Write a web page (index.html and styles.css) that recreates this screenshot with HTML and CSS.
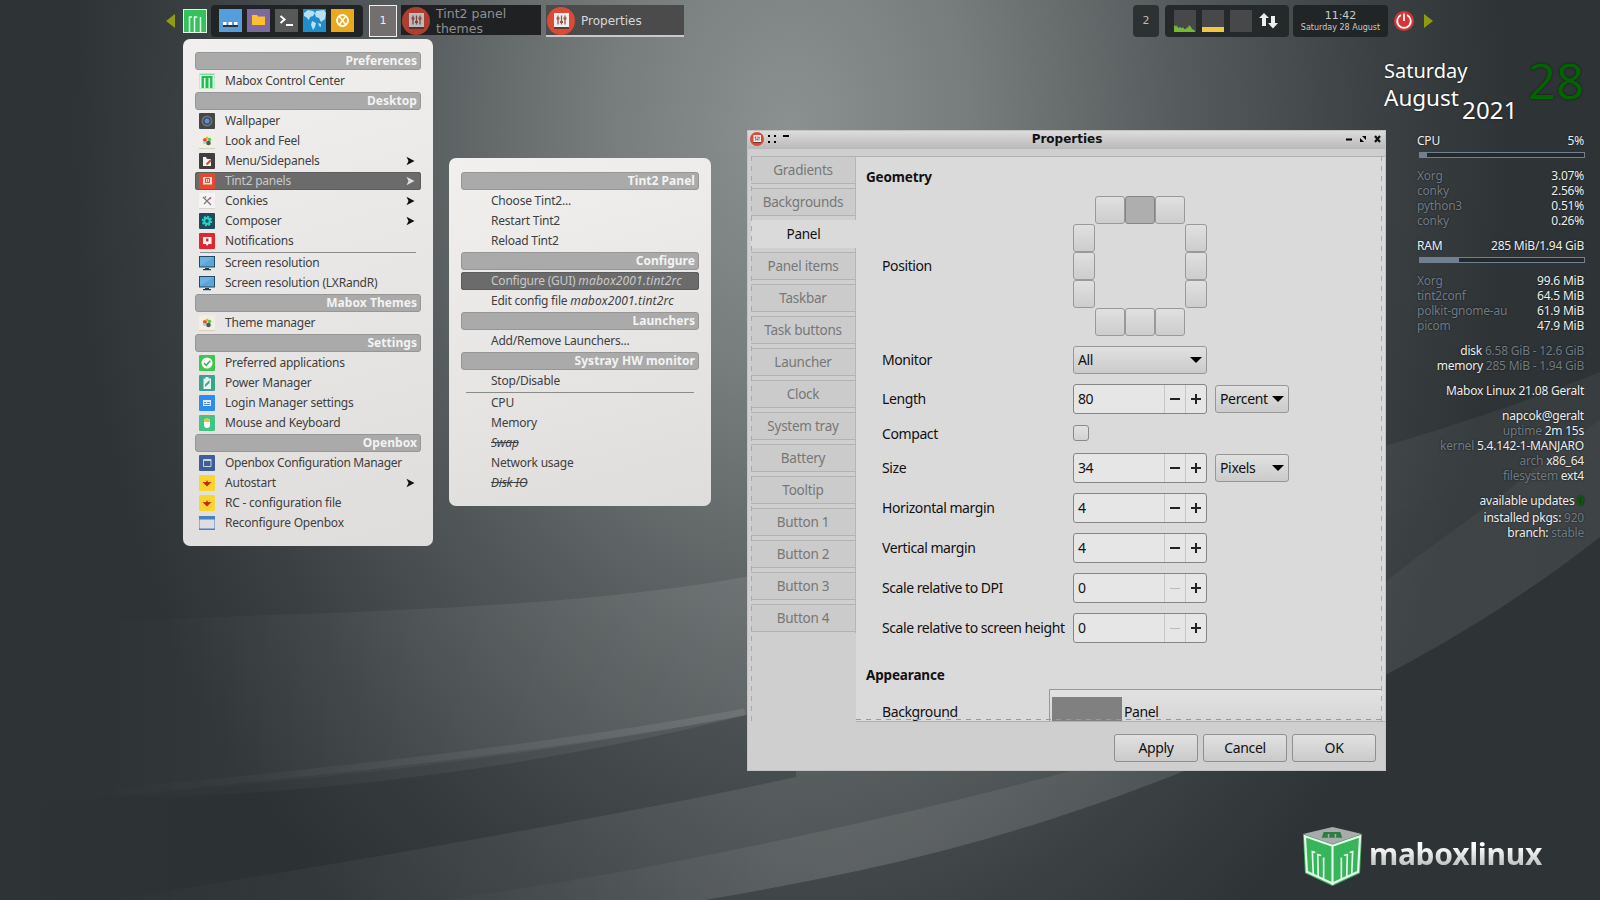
FILE: index.html
```html
<!DOCTYPE html>
<html lang="en">
<head>
<meta charset="utf-8">
<title>Mabox Linux desktop</title>
<link rel="stylesheet" href="styles.css">
</head>
<body>
<div class="desktop">
<svg class="wallpaper" viewBox="0 0 1600 900" preserveAspectRatio="none">
  <defs>
    <radialGradient id="glow" gradientUnits="userSpaceOnUse" cx="0" cy="0" r="1" gradientTransform="translate(790 130) scale(720 1000)">
      <stop offset="0" stop-color="#8b9090"/><stop offset=".25" stop-color="#777c7c"/><stop offset=".55" stop-color="#555b5c"/><stop offset=".82" stop-color="#3b4143"/><stop offset="1" stop-color="#2e3436"/>
    </radialGradient>
    <linearGradient id="fadeA" gradientUnits="userSpaceOnUse" x1="100" y1="0" x2="1600" y2="0"><stop offset="0" stop-color="#fff" stop-opacity="0"/><stop offset=".2" stop-color="#fff" stop-opacity=".05"/><stop offset=".45" stop-color="#fff" stop-opacity=".09"/><stop offset=".8" stop-color="#fff" stop-opacity=".05"/><stop offset="1" stop-color="#fff" stop-opacity=".05"/></linearGradient>
    <linearGradient id="fadeB" gradientUnits="userSpaceOnUse" x1="0" y1="0" x2="1600" y2="0"><stop offset="0" stop-color="#1c2022" stop-opacity="0"/><stop offset=".25" stop-color="#1c2022" stop-opacity=".16"/><stop offset=".7" stop-color="#1c2022" stop-opacity=".05"/><stop offset="1" stop-color="#1c2022" stop-opacity="0"/></linearGradient>
    <linearGradient id="fadeC" gradientUnits="userSpaceOnUse" x1="450" y1="0" x2="1600" y2="0"><stop offset="0" stop-color="#fff" stop-opacity=".01"/><stop offset=".35" stop-color="#fff" stop-opacity=".08"/><stop offset=".8" stop-color="#fff" stop-opacity=".04"/><stop offset="1" stop-color="#fff" stop-opacity=".03"/></linearGradient>
  </defs>
  <rect width="1600" height="900" fill="url(#glow)"/>
  <path fill="url(#fadeA)" d="M100 622C300 612 550 612 745 577C1000 540 1350 475 1600 372V537C1500 615 1388 682 1184 771L745 715C550 765 300 800 100 796Z"/>
  <path fill="url(#fadeB)" d="M0 804C300 785 540 755 745 715C1000 650 1300 560 1600 430V537C1500 615 1388 682 1184 771C1000 845 850 875 704 900H0Z"/>
  <path fill="none" stroke="url(#fadeA)" stroke-width="7" d="M60 797C300 775 540 750 745 712"/>
  <path fill="url(#fadeA)" d="M112 900C300 870 600 820 796 777V765H1184V771C1000 845 850 875 704 900Z"/>
  <path fill="url(#fadeC)" d="M440 900C600 880 850 830 1071 771C1200 715 1300 640 1388 580C1450 530 1500 500 1520 480L1600 420V537C1500 615 1388 682 1184 771C1000 845 850 875 704 900Z"/>
</svg>

<svg class="defs">
  <defs>
    <symbol id="mabox" viewBox="0 0 24 24"><path fill="#dff5e4" d="M0 0h24v24H0z"/><path fill="#35c15c" d="M1 1h22v22H1z"/><path fill="none" stroke="#e8f7ec" stroke-width="1.500" d="M6.500 23V8M11.500 23V8M17.500 23V8M5.800 8h3.200M10.800 8h3.500"/></symbol>
    <symbol id="mabox-s" viewBox="0 0 16 16"><path fill="#b8ecc5" d="M0 0h16v16H0z"/><path fill="#21bd50" d="M1 1h14v14H1z"/><path fill="none" stroke="#e9f8ee" stroke-width="1.600" d="M5.700 15V5M10.300 15V5M1 2.200h14M1.700 2v13M14.300 2v13"/></symbol>
    <symbol id="sliders" viewBox="0 0 28 28"><circle cx="14" cy="14" r="14" fill="#dc4a36"/><path fill="#333" opacity=".7" d="M7 20h15v2H7z"/><path fill="#efefef" d="M7 6h15v14H7z"/><path stroke="#a05048" stroke-width="1.300" d="M11 8.500v9M14.500 8.500v9M18 8.500v9"/><path stroke="#a05048" stroke-width="2" d="M9.500 11.500h3M13 15h3M16.500 11.500h3"/></symbol>
    <symbol id="palette" viewBox="0 0 16 16"><path fill="#f1efe2" d="M0 0h16v15H0z"/><path fill="#d3d0c0" d="M0 15h16v1H0z"/><circle cx="6" cy="7" r="2" fill="#e8473e"/><circle cx="8" cy="5" r="1.500" fill="#f2b32c"/><circle cx="10.500" cy="6.500" r="1.800" fill="#5ac95b"/><circle cx="5.500" cy="9.500" r="1.500" fill="#9cd1e8"/><circle cx="9.500" cy="10" r="2.300" fill="#555"/></symbol>
    <symbol id="monitor" viewBox="0 0 16 16"><path fill="#1f4a66" d="M0 1h16v11.500H0z"/><path fill="#5fa4d6" d="M1 2h14v9.500H1z"/><path fill="#6fb2e0" d="M1 2h14L1 11z"/><path fill="#1f3f55" d="M6 13h4v1h2v1.200H4V14h2z"/></symbol>
    <symbol id="star" viewBox="0 0 16 16"><rect width="16" height="16" rx="1" fill="#f8d631"/><path fill="#c7221a" d="M3.500 7l3.500.3L8 5l1 2.300 3.500-.3L10 9.500 8 11.500 6 9.500z"/></symbol>
    <symbol id="arrow" viewBox="0 0 9 10"><path fill="currentColor" d="M.5 .8L8.500 5 .5 9.200 2.500 5z"/></symbol>
    <symbol id="down" viewBox="0 0 12 6"><path d="M0 0h12L6 6z"/></symbol>
  </defs>
</svg>

<header class="panel">
  <svg class="edge" viewBox="0 0 9 14"><path d="M9 0v14L0 7z"/></svg>
  <svg class="logo24"><use href="#mabox"/></svg>
  <div class="launchers">
    <svg viewBox="0 0 23 23"><path fill="#569edb" d="M0 0h23v23H0z"/><path fill="#333" d="M4 16h15v2H4z"/><path fill="#fff" d="M4 13h3.500v3H4zM9.500 13H13v3H9.500zM15 13h3.500v3H15z"/></svg>
    <svg viewBox="0 0 23 23"><path fill="#7c6a9f" d="M0 0h23v23H0z"/><path fill="#fbbf30" d="M5 6h5l1 1.500h7V16H5z"/></svg>
    <svg viewBox="0 0 23 23"><path fill="#585858" d="M0 0h23v23H0z"/><path fill="none" stroke="#fff" stroke-width="2" d="M5.500 7l4 3.500-4 3.500M11 16h7"/></svg>
    <svg viewBox="0 0 23 23"><path fill="#1f8dcc" d="M0 0h23v23H0z"/><path fill="#b7e0f2" d="M1 4l4-3 5 1 2 2-2 3-3 1-1 3-3-3-2-1zM13 2l8-1 2 3-1 6-4 3-2-4-3-1-1-3zM9 12l4 2-1 4-2 3-2-5zM15 14l3 1v3l-2-1z"/></svg>
    <svg viewBox="0 0 23 23"><path fill="#eaa81c" d="M0 0h23v23H0z"/><circle cx="11.500" cy="11.500" r="5.500" fill="none" stroke="#fff" stroke-width="1.800"/><path fill="none" stroke="#fff" stroke-width="1.500" d="M8.500 7.500l6 8M14.500 7.500l-6 8"/></svg>
  </div>
  <div class="desk desk-on">1</div>
  <div class="task"><svg><use href="#sliders"/></svg><span>Tint2 panel<br>themes</span></div>
  <div class="task task-on"><svg><use href="#sliders"/></svg><span>Properties</span></div>
  <div class="spring"></div>
  <div class="desk">2</div>
  <div class="graphs">
    <svg viewBox="0 0 22 22"><path fill="#474849" d="M0 0h22v22H0z"/><path fill="#77b832" d="M0 22v-6l1-1 1 2 1-2 1 3 2-1 1 1h1l1-1 1 2h2l1-2 1 1 1-3 1 1 1 1 1 2 2 1 1 1v1z"/></svg>
    <svg viewBox="0 0 22 22"><path fill="#474849" d="M0 0h22v22H0z"/><path fill="#f2c63e" d="M0 17h22v5H0z"/></svg>
    <svg viewBox="0 0 22 22"><path fill="#474849" d="M0 0h22v22H0z"/></svg>
    <svg class="net" viewBox="0 0 19 16"><path fill="#eee" d="M5 0l5 5H7v8H3V5H0zM12 3h4v7h3l-5 5.500L9 10h3z"/></svg>
  </div>
  <div class="clock"><b>11:42</b><span>Saturday 28 August</span></div>
  <svg class="power" viewBox="0 0 20 20"><circle cx="10" cy="10" r="10" fill="#d93434"/><path fill="none" stroke="#fff" stroke-width="1.800" d="M7 4a6.800 6.800 0 1 0 6 0M10 2.500V10"/></svg>
  <svg class="edge edge-r" viewBox="0 0 9 14"><path d="M0 0v14l9-7z"/></svg>
</header>

<nav class="menu menu-main">
  <h3>Preferences</h3>
  <a><svg><use href="#mabox-s"/></svg><span>Mabox Control Center</span></a>
  <h3>Desktop</h3>
  <a><svg viewBox="0 0 16 16"><rect width="16" height="16" rx="1" fill="#454545"/><circle cx="8" cy="8" r="5.500" fill="#6b7480"/><circle cx="8" cy="8" r="3.800" fill="#3c4652"/><circle cx="8" cy="8" r="2.500" fill="#5c8fd0"/></svg><span>Wallpaper</span></a>
  <a><svg><use href="#palette"/></svg><span>Look and Feel</span></a>
  <a><svg viewBox="0 0 16 16"><rect width="16" height="16" rx="1" fill="#3f3f3f"/><path fill="#f4f4f4" d="M4 4h3l1 2h4v7H4z"/><path stroke="#d9482b" stroke-width="2" d="M7.500 11.500L12 7"/></svg><span>Menu/Sidepanels</span><svg class="more"><use href="#arrow"/></svg></a>
  <a class="on"><svg viewBox="0 0 16 16"><rect width="16" height="16" rx="1" fill="#e2492f"/><path fill="#f5ddd8" d="M4 4h9v7.500H4z"/><path fill="none" stroke="#d0503c" d="M6.500 5.500h4v4h-4zM8.500 6.500v2"/></svg><span>Tint2 panels</span><svg class="more"><use href="#arrow"/></svg></a>
  <a><svg viewBox="0 0 16 16"><path fill="#f4f4f4" d="M0 0h16v15H0z"/><path fill="#d5d5d5" d="M0 15h16v1H0z"/><path stroke="#777" stroke-width="1.100" d="M4 4l8 8M11 5l-6 6"/><path stroke="#c33a8a" stroke-width="1.500" d="M10.500 6l1.500-1.500M6 4.500l1-1"/></svg><span>Conkies</span><svg class="more"><use href="#arrow"/></svg></a>
  <a><svg viewBox="0 0 16 16"><rect width="16" height="16" rx="1" fill="#1d4b57"/><circle cx="8" cy="8" r="4.300" fill="none" stroke="#27cfc8" stroke-width="2" stroke-dasharray="2 1.300"/><circle cx="8" cy="8" r="2.800" fill="#1d4b57" stroke="#27cfc8" stroke-width="2.200"/></svg><span>Composer</span><svg class="more"><use href="#arrow"/></svg></a>
  <a><svg viewBox="0 0 16 16"><rect width="16" height="16" rx="1" fill="#e2262f"/><path fill="#fff" d="M4 4h8.500v7H9.500L8 13l-1-2H4z"/><path fill="#e2262f" d="M7 5.500h2.500v3H7z"/></svg><span>Notifications</span></a>
  <hr>
  <a><svg><use href="#monitor"/></svg><span>Screen resolution</span></a>
  <a><svg><use href="#monitor"/></svg><span>Screen resolution (LXRandR)</span></a>
  <h3>Mabox Themes</h3>
  <a><svg><use href="#palette"/></svg><span>Theme manager</span></a>
  <h3>Settings</h3>
  <a><svg viewBox="0 0 16 16"><rect width="16" height="16" rx="1" fill="#3fc651"/><circle cx="8" cy="8" r="5.500" fill="#fff"/><path fill="none" stroke="#3fb650" stroke-width="1.600" d="M5 8l2.300 2.300L11.300 5.800"/></svg><span>Preferred applications</span></a>
  <a><svg viewBox="0 0 16 16"><rect width="16" height="16" rx="1" fill="#3ba48f"/><path fill="#e8f4f0" d="M6.500 2h3v1.500H12V14H4.500V3.500h2z"/><path fill="#3ba48f" d="M10.500 5L6 9.500V12l4.500-4z"/></svg><span>Power Manager</span></a>
  <a><svg viewBox="0 0 16 16"><rect width="16" height="16" rx="1" fill="#2a8df0"/><path fill="#dcecfb" d="M4 5h8v6H4z"/><path stroke="#5a8fc8" d="M5 7.500h2M8 7.500h3M5 9.500h6"/></svg><span>Login Manager settings</span></a>
  <a><svg viewBox="0 0 16 16"><rect width="16" height="16" rx="1" fill="#42c483"/><rect x="5" y="3.500" width="6" height="9.500" rx="3" fill="#fff"/><path fill="#f3bf35" d="M5 7V5.500l2-2h2l2 2V7z"/></svg><span>Mouse and Keyboard</span></a>
  <h3>Openbox</h3>
  <a><svg viewBox="0 0 16 16"><rect width="16" height="16" rx="1" fill="#3d5f96"/><path fill="none" stroke="#c9d3e2" d="M4.500 4.500h7.500v7H4.500zM4 5.500h8"/></svg><span class="long">Openbox Configuration Manager</span></a>
  <a><svg><use href="#star"/></svg><span>Autostart</span><svg class="more"><use href="#arrow"/></svg></a>
  <a><svg><use href="#star"/></svg><span>RC - configuration file</span></a>
  <a><svg viewBox="0 0 16 16"><path fill="#4a7fc0" d="M0 1h16v14H0z"/><path fill="#dcdfe2" d="M.5 4.500h15v9H.5z"/></svg><span>Reconfigure Openbox</span></a>
</nav>

<nav class="menu menu-sub">
  <h3>Tint2 Panel</h3>
  <a><span>Choose Tint2...</span></a>
  <a><span>Restart Tint2</span></a>
  <a><span>Reload Tint2</span></a>
  <h3>Configure</h3>
  <a class="on"><span>Configure (GUI) <i>mabox2001.tint2rc</i></span></a>
  <a><span>Edit config file <i>mabox2001.tint2rc</i></span></a>
  <h3>Launchers</h3>
  <a><span>Add/Remove Launchers...</span></a>
  <h3>Systray HW monitor</h3>
  <a><span>Stop/Disable</span></a>
  <hr>
  <a><span>CPU</span></a>
  <a><span>Memory</span></a>
  <a><span><s>Swap</s></span></a>
  <a><span>Network usage</span></a>
  <a><span><s>Disk IO</s></span></a>
</nav>

<section class="window">
  <div class="titlebar">
    <svg class="app"><use href="#sliders"/></svg>
    <svg class="marks" viewBox="0 0 24 10"><path d="M1 1h2v2H1zM7 1h2v2H7zM1 7h2v2H1zM7 7h2v2H7zM16 1h6v2h-6z"/></svg>
    <b>Properties</b>
    <svg class="ctl" viewBox="0 0 36 8"><path d="M0 3.500h6v2H0zM16 1h4v4zM14 3v4h4z"/><path stroke="#111" stroke-width="2.200" d="M29 1l5 6M34 1l-5 6"/></svg>
  </div>
  <div class="body">
    <ul class="tabs">
      <li>Gradients</li><li>Backgrounds</li><li class="sel">Panel</li><li>Panel items</li><li>Taskbar</li><li>Task buttons</li><li>Launcher</li><li>Clock</li><li>System tray</li><li>Battery</li><li>Tooltip</li><li>Button 1</li><li>Button 2</li><li>Button 3</li><li>Button 4</li>
    </ul>
    <div class="page">
      <h4>Geometry</h4>
      <div class="row r-pos"><label>Position</label>
        <div class="pos">
          <div class="hz"><i></i><i class="set"></i><i></i></div>
          <div class="mid"><div class="vt"><i></i><i></i><i></i></div><div class="vt"><i></i><i></i><i></i></div></div>
          <div class="hz"><i></i><i></i><i></i></div>
        </div>
      </div>
      <div class="row r-mon"><label>Monitor</label><div class="combo wide"><span>All</span><svg><use href="#down"/></svg></div></div>
      <div class="row r-len"><label>Length</label><div class="spin"><span>80</span><b class="minus"></b><b class="plus"></b></div><div class="combo"><span>Percent</span><svg><use href="#down"/></svg></div></div>
      <div class="row r-chk"><label>Compact</label><div class="check"></div></div>
      <div class="row"><label>Size</label><div class="spin"><span>34</span><b class="minus"></b><b class="plus"></b></div><div class="combo"><span>Pixels</span><svg><use href="#down"/></svg></div></div>
      <div class="row"><label>Horizontal margin</label><div class="spin"><span>4</span><b class="minus"></b><b class="plus"></b></div></div>
      <div class="row"><label>Vertical margin</label><div class="spin"><span>4</span><b class="minus"></b><b class="plus"></b></div></div>
      <div class="row"><label>Scale relative to DPI</label><div class="spin"><span>0</span><b class="minus off"></b><b class="plus"></b></div></div>
      <div class="row"><label>Scale relative to screen height</label><div class="spin"><span>0</span><b class="minus off"></b><b class="plus"></b></div></div>
      <h4 class="second">Appearance</h4>
      <div class="bgrow"><label>Background</label><div class="bgbox"><div class="swatch"></div><span>Panel</span></div></div>
    </div>
  </div>
  <footer><button>Apply</button><button>Cancel</button><button>OK</button></footer>
</section>

<div class="date"><div class="words"><span>Saturday</span><span>August</span></div><span class="year">2021</span><span class="day">28</span></div>

<aside class="conky">
  <p><span>CPU</span><span>5%</span></p>
  <div class="bar"><div style="width:4%"></div></div>
  <p><em>Xorg</em><span>3.07%</span></p>
  <p><em>conky</em><span>2.56%</span></p>
  <p><em>python3</em><span>0.51%</span></p>
  <p><em>conky</em><span>0.26%</span></p>
  <p class="gap"><span>RAM</span><span>285 MiB/1.94 GiB</span></p>
  <div class="bar"><div style="width:23.5%"></div></div>
  <p><em>Xorg</em><span>99.6 MiB</span></p>
  <p><em>tint2conf</em><span>64.5 MiB</span></p>
  <p><em>polkit-gnome-au</em><span>61.9 MiB</span></p>
  <p><em>picom</em><span>47.9 MiB</span></p>
  <div class="right">
    <div class="gap">disk <em>6.58 GiB - 12.6 GiB</em></div>
    <div>memory <em>285 MiB - 1.94 GiB</em></div>
    <div class="gap">Mabox Linux 21.08 Geralt</div>
    <div class="gap">napcok@geralt</div>
    <div><em>uptime</em> 2m 15s</div>
    <div><em>kernel</em> 5.4.142-1-MANJARO</div>
    <div><em>arch</em> x86_64</div>
    <div><em>filesystem</em> ext4</div>
    <div class="gap">available updates <strong>0</strong></div>
    <div class="pk">installed pkgs: <em>920</em></div>
    <div>branch: <em>stable</em></div>
  </div>
</aside>

<div class="brand">
  <svg viewBox="0 0 60 60"><path fill="#a9abab" d="M30 0l30 7-30 11L0 7z"/><path fill="#2e7d46" d="M21 5h17l2 6H19z"/><path stroke="#a9abab" stroke-width="1.500" d="M26 7v4M33 7v4"/><path fill="#36b55a" d="M0 7l30 10v43L2 47zM60 7L30 17v43l28-13z"/><path fill="none" stroke="#e9f5ec" stroke-width="2.200" d="M2 9.500l28 9.500v38.500L4 45.500zM58 9.500L30 19v38.500l26-12z"/><path fill="none" stroke="#e9f5ec" stroke-width="1.700" d="M10.500 49L9.500 25l3 1M15.500 51L15 28l3.500 1M21 53.500V31M49.500 49l1-24-3 1M44.500 51L45 28l-3.500 1M39 53.500V31"/></svg>
  <span>maboxlinux</span>
</div>
</div>
</body>
</html>
```
FILE: styles.css
```css
* { box-sizing: border-box; }
body { margin: 0; background: #2e3436; }
.desktop { position: relative; width: 1600px; height: 900px; overflow: hidden; font-family: "Noto Sans", sans-serif; }
.wallpaper { position: absolute; inset: 0; width: 1600px; height: 900px; }
.defs { position: absolute; width: 0; height: 0; }

/* top panel */
.panel { position: absolute; left: 166px; top: 0; width: 1267px; height: 41px; display: flex; align-items: center; font-family: "DejaVu Sans", sans-serif; color: #c8c8c8; }
.edge { width: 9px; height: 14px; fill: #8d9d0c; }
.edge-r { margin-left: 10px; }
.logo24 { width: 24px; height: 24px; margin-left: 8px; }
.launchers { display: flex; gap: 5px; align-items: center; width: 152px; height: 32px; margin-left: 4px; padding-left: 8px; background: #202425; border-radius: 4px; }
.launchers svg { width: 23px; height: 23px; }
.desk { width: 26px; height: 32px; border-radius: 4px; background: #2d3132; font-size: 11px; display: flex; align-items: center; justify-content: center; color: #bbb; }
.desk-on { width: 28px; margin-left: 6px; background: #736f6e; border: 1px solid #eee; border-radius: 0; color: #eee; }
.task { width: 140px; height: 32px; margin-left: 4px; background: linear-gradient(#1f2122 30px, transparent 30px); display: flex; align-items: center; gap: 6px; font-size: 12.5px; line-height: 15px; color: #8f9090; }
.task svg { width: 28px; height: 28px; margin-left: 1px; opacity: .75; }
.task-on { width: 138px; margin-left: 5px; background: linear-gradient(#4b4b4b 30px, #c9c9c9 30px); color: #d8d8d8; font-size: 12px; }
.task-on span { padding-top: 1px; }
.task-on svg { opacity: 1; }
.spring { flex: 1; }
.graphs { display: flex; align-items: center; gap: 6px; width: 124px; height: 32px; margin-left: 6px; padding-left: 9px; background: #26292a; border-radius: 4px; }
.graphs svg { width: 22px; height: 22px; }
.graphs .net { width: 19px; height: 16px; margin-left: 1px; }
.clock { width: 95px; height: 32px; margin-left: 4px; background: #222526; border-radius: 4px; display: flex; flex-direction: column; align-items: center; padding-top: 4px; }
.clock b { font-weight: 400; font-size: 11px; line-height: 13px; }
.clock span { font-size: 8px; line-height: 11px; white-space: nowrap; }
.power { width: 20px; height: 20px; margin-left: 6px; }

/* menus */
.menu { position: absolute; padding: 13px 12px 0; border-radius: 7px; background: linear-gradient(165deg, #f1f0ef, #dfdddb); color: #404040; font-size: 12px; letter-spacing: -.22px; word-spacing: 0; }
.menu-main { left: 183px; top: 39px; width: 250px; height: 507px; }
.menu-sub { left: 449px; top: 158px; width: 262px; height: 348px; padding-top: 14px; }
.menu h3 { margin: 0 0 2px; height: 18px; line-height: 16px; padding-right: 3px; border: 1px solid #969696; border-radius: 3px; background: #aaa; color: #f3f3f3; font-size: 12px; font-weight: 700; text-align: right; letter-spacing: .05px; }
.menu a { display: flex; align-items: center; height: 18px; margin-bottom: 2px; padding: 0 6px 0 4px; border-radius: 3px; line-height: 18px; white-space: nowrap; }
.menu a > svg { width: 16px; height: 16px; flex: none; }
.menu a span { margin-left: 10px; }
.menu a .long { letter-spacing: -.34px; }
.menu-sub a span { margin-left: 26px; }
.menu i { letter-spacing: .15px; }
.menu a .more { width: 9px; height: 10px; margin-left: auto; color: #111; }
.menu a.on { background: #6b6b6b; color: #c9c9c9; box-shadow: inset 0 0 0 1px #5c5c5c; }
.menu a.on .more { color: #ddd; }
.menu hr { margin: 0 5px 1px; border: 0; height: 1px; background: #8a8c8a; }
.menu s { font-style: italic; }

/* window */
.window { position: absolute; left: 747px; top: 130px; width: 639px; height: 641px; background: #cfcfcf; border: 1px solid #c2c2c2; color: #111; font-size: 14px; display: flex; flex-direction: column; }
.titlebar { height: 18px; background: linear-gradient(#dcdcdc, #b9b9b9); display: flex; align-items: center; padding: 0 3px 2px 2px; }
.titlebar b { flex: 1; text-align: center; font: 700 12px/16px "DejaVu Sans", sans-serif; padding-right: 3px; }
.app { width: 14px; height: 14px; }
.marks { width: 24px; height: 10px; margin-left: 3px; }
.ctl { width: 36px; height: 8px; }
.body { position: relative; display: flex; height: 566px; margin: 7px 0 0 3px; flex: none; }
.body::before, .body::after { content: ""; position: absolute; top: 0; bottom: 0; width: 1px; background: repeating-linear-gradient(#aaa 0 5px, transparent 5px 10px); }
.body::before { left: 0; }
.body::after { right: 3px; }
.tabs { margin: 0; padding: 0; list-style: none; width: 105px; flex: none; display: flex; flex-direction: column; gap: 4px; border-right: 1px solid #b5b5b5; height: 477px; }
.tabs li { height: 28px; line-height: 27px; border: solid #b3b3b3; border-width: 1px 0; text-align: center; color: #777; font-size: 13.5px; letter-spacing: -.25px; background: #cbcbcb; flex: none; }
.tabs .sel { background: #dadada; color: #111; border-color: #dadada; margin-right: -1px; }
.page { flex: 1; height: 566px; background: #dadada; border: solid #b0b0b0; border-width: 1px 0 1px; overflow: hidden; padding-left: 10px; position: relative; letter-spacing: -.4px; word-spacing: -.3px; }
.page::after { content: ""; position: absolute; left: 0; right: 3px; bottom: 1px; height: 1px; background: repeating-linear-gradient(90deg, #999 0 5px, transparent 5px 10px); }
.page h4 { margin: 10px 0 0; font-size: 13.5px; line-height: 20px; letter-spacing: -.15px; }
.row { display: flex; align-items: center; height: 30px; margin-bottom: 10px; padding-left: 16px; }
.row label { width: 191px; white-space: nowrap; flex: none; padding-bottom: 2px; }
.r-pos { height: 140px; margin: 9px 0 10px; }
.r-mon { height: 28px; margin-bottom: 10px; }
.r-chk { height: 18px; margin-bottom: 11px; }
.r-chk label { padding-bottom: 0; }
.pos { width: 134px; }
.pos i { display: block; border: 1px solid #999; border-radius: 3px; background: linear-gradient(#e0e0e0, #cdcdcd); height: 28px; }
.hz { display: flex; justify-content: center; }
.hz i { width: 30px; }
.vt i { width: 22px; }
.mid { display: flex; justify-content: space-between; }
.pos .set { background: #aeaeae; border-color: #858585; }
.combo { display: flex; align-items: center; justify-content: space-between; width: 74px; height: 28px; margin-left: 8px; padding: 0 4px; border: 1px solid #979797; border-radius: 3px; background: linear-gradient(#e1e1e1, #cbcbcb); letter-spacing: -.35px; line-height: 24px; }
.combo span { padding-bottom: 1px; }
.combo svg { width: 12px; height: 6px; flex: none; }
.wide { width: 134px; margin-left: 0; }
.spin { display: flex; width: 134px; height: 30px; border: 1px solid #858585; border-radius: 3px; background: #e6e6e6; line-height: 27px; }
.spin span { flex: 1; padding-left: 4px; }
.spin b { width: 21px; border-left: 1px solid #c6c6c6; background: linear-gradient(#222, #222) center / 10px 2px no-repeat; }
.spin .plus { background: linear-gradient(#222, #222) center / 10px 2px no-repeat, linear-gradient(#222, #222) center / 2px 10px no-repeat; }
.spin .off { background: linear-gradient(#bbb, #bbb) center / 10px 1px no-repeat; }
.check { width: 16px; height: 16px; border: 1px solid #8a8a8a; border-radius: 3px; background: linear-gradient(#e2e2e2, #d2d2d2); }
.page .second { margin-top: 22px; }
.bgrow { display: flex; padding-left: 16px; margin-top: 4px; }
.bgrow label { width: 167px; line-height: 45px; }
.bgbox { flex: 1; height: 60px; margin-right: 3px; border: 1px solid #999; border-width: 1px 0 0 1px; background: linear-gradient(#e2e2e2, #ccc); display: flex; line-height: 43px; gap: 2px; }
.swatch { width: 70px; height: 50px; margin: 7px 0 0 2px; background: #808080; }
.window footer { display: flex; justify-content: flex-end; gap: 5px; padding: 12px 9px 0 0; }
.window button { width: 84px; height: 28px; padding: 0 0 1px; border: 1px solid #8f8f8f; border-radius: 3px; background: linear-gradient(#e1e1e1, #cacaca); font: 14px "Noto Sans", sans-serif; letter-spacing: -.35px; color: #111; }

/* desktop date */
.date { position: absolute; left: 1384px; top: 57px; width: 200px; display: flex; color: #fff; font-size: 20px; text-shadow: 0 0 2px #111; }
.words { display: flex; flex-direction: column; width: 78px; line-height: 28px; white-space: nowrap; }
.words span + span { font-size: 22.5px; line-height: 26px; }
.year { font-size: 24px; line-height: 28px; margin-top: 39px; letter-spacing: .2px; }
.day { margin: -8px 0 0 auto; font-size: 49px; line-height: 62px; color: #006400; }

/* system monitor */
.conky { position: absolute; left: 1417px; top: 133px; width: 167px; color: #eee; font-size: 12px; line-height: 15px; letter-spacing: -.22px; text-shadow: 0 0 2px #111; white-space: nowrap; }
.conky p { margin: 0; display: flex; justify-content: space-between; }
.conky em { font-style: normal; color: #6f7b86; }
.conky .gap { margin-top: 10px; }
.bar { height: 6px; margin: 4px -1px 10px 2px; border: 1px solid #708090; background: #24292b; }
.bar div { height: 4px; background: #708090; }
.right { text-align: right; }
.right .pk { margin-top: 2px; }
.conky strong { color: #006400; font-weight: 700; }

/* brand */
.brand { position: absolute; left: 1303px; top: 827px; display: flex; align-items: center; gap: 7px; }
.brand svg { width: 59px; height: 59px; }
.brand span { font-size: 30px; line-height: 40px; font-weight: 700; letter-spacing: -.3px; margin-top: -5px; background: linear-gradient(#fff 30%, #c4c6c6 75%); -webkit-background-clip: text; background-clip: text; color: transparent; }
```
